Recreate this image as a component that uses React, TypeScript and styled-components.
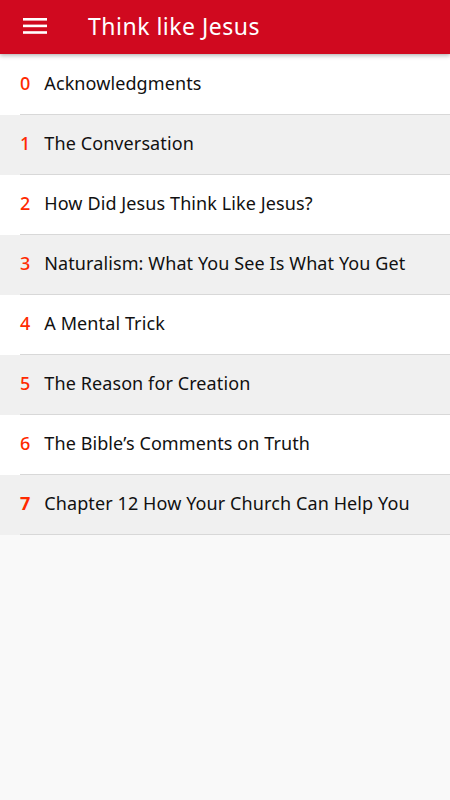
import styled, { createGlobalStyle } from 'styled-components';

const chapters = [
  'Acknowledgments',
  'The Conversation',
  'How Did Jesus Think Like Jesus?',
  'Naturalism: What You See Is What You Get',
  'A Mental Trick',
  'The Reason for Creation',
  'The Bible’s Comments on Truth',
  'Chapter 12 How Your Church Can Help You',
];

const GlobalStyle = createGlobalStyle`
  html, body {
    margin: 0;
    padding: 0;
    background: #f9f9f9;
  }
  body {
    font-family: 'Noto Sans', 'DejaVu Sans', sans-serif;
  }
`;

const Page = styled.div`
  min-height: 800px;
  background: #f9f9f9;
`;

const Toolbar = styled.header`
  position: relative;
  z-index: 1;
  display: flex;
  align-items: center;
  height: 54px;
  background: #d0091f;
  box-shadow: 0 2px 4px rgba(0, 0, 0, 0.25);
`;

const MenuButton = styled.button`
  display: flex;
  align-items: center;
  justify-content: center;
  width: 24px;
  height: 24px;
  margin-left: 23px;
  padding: 0;
  border: none;
  background: none;
`;

const Title = styled.h1`
  margin: 0 0 2px 41px;
  color: #fff;
  font-size: 23px;
  font-weight: 400;
  letter-spacing: 0.5px;
`;

const List = styled.ul`
  margin: 1px 0 0;
  padding: 0;
  list-style: none;
`;

const Row = styled.li<{ $shaded: boolean }>`
  background: ${(p) => (p.$shaded ? '#f0f0f0' : '#ffffff')};
`;

const RowInner = styled.div`
  display: flex;
  align-items: center;
  gap: 14px;
  box-sizing: border-box;
  height: 60px;
  padding-bottom: 3px;
  margin-left: 20px;
  border-bottom: 1px solid #d8d8d8;
`;

const Num = styled.span<{ $bold: boolean }>`
  color: #ff2a00;
  font-size: 18px;
  font-weight: ${(p) => (p.$bold ? 700 : 500)};
`;

const Label = styled.span`
  color: #111;
  font-size: 18px;
  letter-spacing: 0.1px;
`;

function HamburgerIcon() {
  return (
    <svg width='24' height='18' viewBox='0 0 24 18'>
      <rect x='0' y='0' width='24' height='2.6' fill='#fff' />
      <rect x='0' y='6.6' width='24' height='2.6' fill='#fff' />
      <rect x='0' y='13.2' width='24' height='2.6' fill='#fff' />
    </svg>
  );
}

export default function App() {
  return (
    <Page>
      <GlobalStyle />
      <Toolbar>
        <MenuButton type='button' aria-label='menu'>
          <HamburgerIcon />
        </MenuButton>
        <Title>Think like Jesus</Title>
      </Toolbar>
      <List>
        {chapters.map((title, i) => (
          <Row key={title} $shaded={i % 2 === 1}>
            <RowInner>
              <Num $bold={i === 7}>{i}</Num>
              <Label>{title}</Label>
            </RowInner>
          </Row>
        ))}
      </List>
    </Page>
  );
}
